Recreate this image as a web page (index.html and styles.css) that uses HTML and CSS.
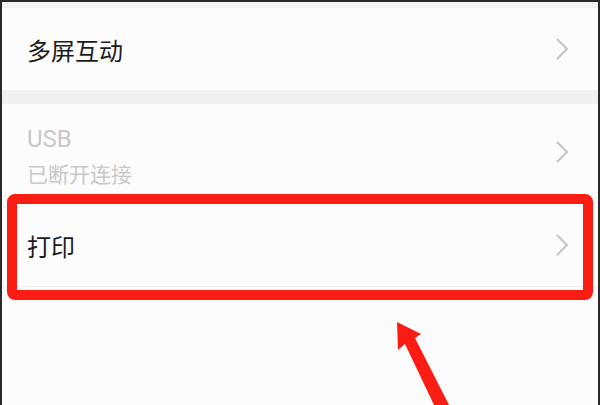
FILE: index.html
```html
<!DOCTYPE html>
<html lang="zh-CN">
<head>
    <meta charset="UTF-8">
    <meta name="viewport" content="width=device-width, initial-scale=1.0">
    <title>连接与共享</title>
    <link rel="stylesheet" href="styles.css">
</head>
<body>
    <div class="page">
        <div class="screen">
            <div class="top-strip"></div>

            <div class="item">
                <span class="title">多屏互动</span>
                <svg class="chevron" width="14" height="24" viewBox="0 0 14 24">
                    <polyline points="2,2 12,12 2,22" />
                </svg>
            </div>

            <div class="group-gap"></div>

            <div class="item item-usb">
                <div class="text">
                    <div class="title disabled">USB</div>
                    <div class="subtitle">已断开连接</div>
                </div>
                <svg class="chevron" width="14" height="24" viewBox="0 0 14 24">
                    <polyline points="2,2 12,12 2,22" />
                </svg>
            </div>

            <div class="item item-print">
                <span class="title">打印</span>
                <svg class="chevron" width="14" height="24" viewBox="0 0 14 24">
                    <polyline points="2,2 12,12 2,22" />
                </svg>
            </div>
        </div>

        <!-- annotation -->
        <div class="highlight"></div>
        <svg class="arrow" width="600" height="405" viewBox="0 0 600 405">
            <polygon points="397,322 421,334 415,338 449,405 434,405 405,344 398,350" />
        </svg>
    </div>
</body>
</html>
```

FILE: styles.css
```css
body {
    margin: 0;
    padding: 0;
    font-family: "Noto Sans CJK SC", "Noto Sans", sans-serif;
    background-color: #fcfcfc;
}

.page {
    position: relative;
    width: 600px;
    height: 405px;
    overflow: hidden;
}

.screen {
    height: 405px;
    box-sizing: border-box;
    border: 2px solid #2a2a2a;
    border-bottom: none;
    background-color: #fcfcfc;
}

.top-strip {
    height: 6px;
    background-color: #f3f3f3;
}

.item {
    height: 82px;
    display: flex;
    align-items: center;
    justify-content: space-between;
    padding: 0 29px 0 25px;
}

.title {
    font-size: 24px;
    color: #1c1c1c;
}

.title.disabled {
    font-family: "Roboto", "Noto Sans", sans-serif;
    font-size: 24px;
    line-height: 34px;
    color: #c8c8c8;
}

.subtitle {
    font-size: 21px;
    line-height: 34px;
    color: #c8c8c8;
}

.item-usb .text {
    margin-top: 4px;
}

.chevron polyline {
    fill: none;
    stroke: #c4c4c4;
    stroke-width: 2;
}

.group-gap {
    height: 14px;
    background-color: #f0f0f0;
}

.item-usb {
    height: 100px;
}

.item-usb .chevron {
    margin-top: -4px;
}

.item-print {
    border-bottom: 1px solid #efefef;
}

.highlight {
    position: absolute;
    left: 7px;
    top: 194px;
    width: 586px;
    height: 106px;
    box-sizing: border-box;
    border: 10px solid #fb1d13;
    border-radius: 8px;
}

.arrow {
    position: absolute;
    left: 0;
    top: 0;
}

.arrow polygon {
    fill: #fb1d13;
}
```
